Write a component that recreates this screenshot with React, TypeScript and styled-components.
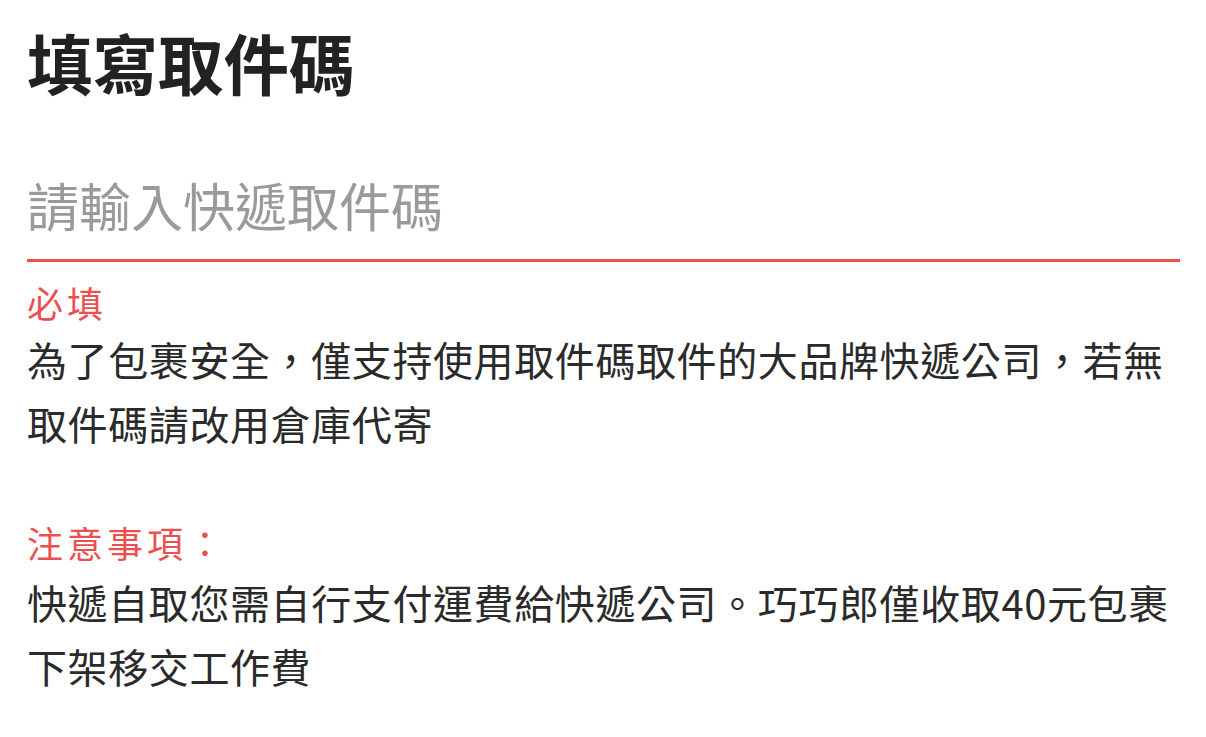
import styled, { createGlobalStyle } from "styled-components";

const GlobalStyle = createGlobalStyle`
  body {
    margin: 0;
    background: #ffffff;
    font-family: "Noto Sans CJK TC", "Noto Sans", sans-serif;
  }
`;

const App = () => {
  return (
    <>
      <GlobalStyle />
      <Page>
        <Title>填寫取件碼</Title>
        <CodeInput placeholder="請輸入快遞取件碼" />
        <Label>必填</Label>
        <Paragraph>
          為了包裹安全，僅支持使用取件碼取件的大品牌快遞公司，若無取件碼請改用倉庫代寄
        </Paragraph>
        <Label $spaced>注意事項：</Label>
        <Paragraph>
          快遞自取您需自行支付運費給快遞公司。巧巧郎僅收取40元包裹下架移交工作費
        </Paragraph>
      </Page>
    </>
  );
};

const Page = styled.main`
  display: flex;
  flex-direction: column;
  padding: 16px 26px 0 27px;
`;

const Title = styled.h1`
  margin: 0;
  font-size: 65.5px;
  font-weight: 700;
  line-height: 92px;
  color: #222222;
`;

const CodeInput = styled.input`
  margin-top: 62px;
  padding: 0 0 19px;
  border: none;
  border-bottom: 3px solid #e8524f;
  outline: none;
  background: transparent;
  font-family: inherit;
  font-size: 52px;
  line-height: 70px;
  color: #222222;

  &::placeholder {
    color: #9a9a9a;
  }
`;

const Label = styled.div<{ $spaced?: boolean }>`
  margin: ${(p) => (p.$spaced ? "62px 0 3px" : "15px 0 0")};
  font-size: 36px;
  letter-spacing: 4px;
  line-height: 50px;
  color: #ec4f4f;
`;

const Paragraph = styled.p`
  margin: 0;
  font-size: 40px;
  letter-spacing: 0.6px;
  line-height: 64px;
  color: #2a2a2a;
`;

export default App;
